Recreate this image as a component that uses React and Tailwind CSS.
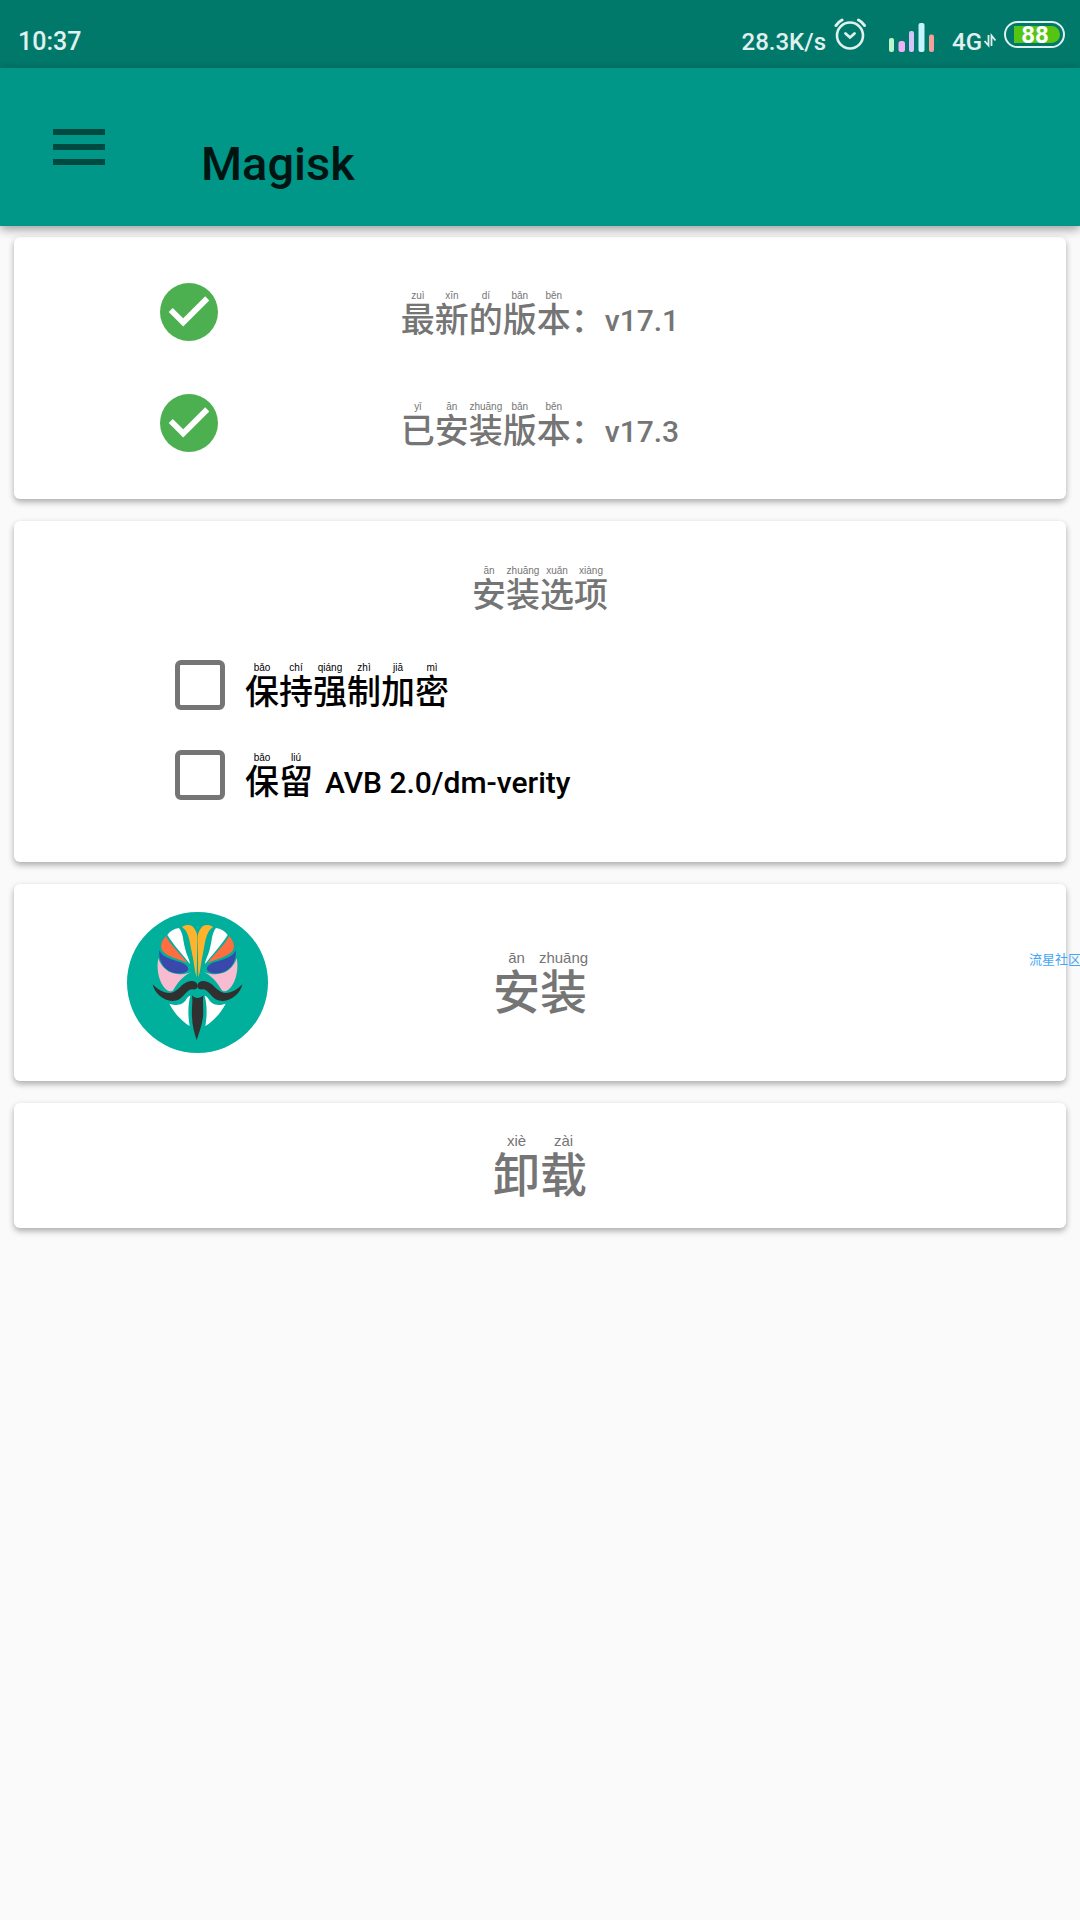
import React, { useState } from 'react';

const Hanzi = ({ chars, large = false }) => (
  <span className="flex">
    {chars.map(([char, pinyin]) => (
      <span
        key={char}
        className={large ? 'flex w-[47px] flex-col items-center' : 'flex w-[34px] flex-col items-center'}
      >
        <span
          className={
            large
              ? "font-['Liberation_Sans',sans-serif] text-[15px] leading-[20px] font-normal"
              : "font-['Liberation_Sans',sans-serif] text-[10px] leading-[14px] font-normal"
          }
        >
          {pinyin}
        </span>
        <span className={large ? 'text-[47px] leading-[50px]' : 'text-[34px] leading-[34px]'}>{char}</span>
      </span>
    ))}
  </span>
);

const StatusBar = () => (
  <div className="flex items-start justify-between bg-[#00796b] pt-4 pr-[15px] pb-3 pl-[18px] text-[25px] leading-[28px] text-[#e0f0ee]">
    <span className="self-end font-medium">10:37</span>
    <div className="flex h-10">
      <span className="self-end text-[24px] font-medium">28.3K/s</span>
      <svg className="ml-2 h-10 w-8" viewBox="834 16 32 40" fill="none" stroke="currentColor" strokeLinecap="round">
        <circle cx="850" cy="35.5" r="13" strokeWidth="2.6" />
        <path d="M845.500 33.500l4.500 4 4.500-4" strokeWidth="2.8" />
        <path d="M836 25.500q2-3.500 6-5.500M858.500 20q4 2 6 5.500" strokeWidth="3" />
      </svg>
      <svg className="ml-[22px] h-10 w-12" viewBox="888 16 48 40">
        <rect x="889" y="38" width="5" height="14" rx="2" fill="#b9f6ca" />
        <rect x="898.500" y="41" width="6.500" height="11" rx="2.500" fill="#f0b0f8" />
        <rect x="909" y="31" width="5" height="21" rx="2" fill="#d4c4f8" />
        <rect x="918.500" y="23" width="6" height="29" rx="2" fill="#c4f4fc" />
        <rect x="929" y="34.500" width="5" height="17.500" rx="2" fill="#f4a09c" />
      </svg>
      <span className="ml-4 self-end text-[24px] font-medium">4G</span>
      <svg className="ml-[2px] h-10 w-3" viewBox="984 16 12 40" fill="none" stroke="currentColor" strokeWidth="1.800">
        <path d="M988.500 35v10.500L984.500 41M991.500 46V35.500l4 5" />
      </svg>
      <div className="mt-[5px] ml-2 flex h-[27px] w-[61px] rounded-full border-2 border-[#e0f0ee] p-[3px]">
        <div className="ml-[5px] flex flex-1 items-center justify-center rounded-l-sm rounded-r-full bg-[#55c413] pr-1 text-[24px] font-bold text-white">
          88
        </div>
      </div>
    </div>
  </div>
);

const Toolbar = () => (
  <header className="relative flex h-[158px] items-start bg-[#009688] pl-[53px] shadow-[0_3px_10px_rgba(0,0,0,0.4)]">
    <button type="button" aria-label="Menu" className="mt-[61px] flex w-[52px] flex-col gap-[9px]">
      <span className="h-[6px] bg-[#004940]" />
      <span className="h-[6px] bg-[#004940]" />
      <span className="h-[6px] bg-[#004940]" />
    </button>
    <h1 className="mt-[66px] ml-24 text-[47px] leading-[60px] font-medium text-[#001512]">Magisk</h1>
  </header>
);

const CheckIcon = () => (
  <svg className="mb-[2px] size-[58px] justify-self-center" viewBox="2 2 20 20">
    <circle cx="12" cy="12" r="10" fill="#4caf50" />
    <path
      fill="#fff"
      d="M10 17l-5-5 1.410-1.410L10 14.170l7.590-7.590L19 8l-9 9z"
    />
  </svg>
);

const VersionRow = ({ chars, version }) => (
  <div className="grid h-[111px] grid-cols-3 items-center font-medium text-[#757575]">
    <CheckIcon />
    <div className="flex items-end justify-center whitespace-nowrap">
      <Hanzi chars={chars} />
      <span className="text-[34px] leading-[34px]">：</span>
      <span className="text-[30px] leading-[32px]">{version}</span>
    </div>
  </div>
);

const OptionRow = ({ id, chars, suffix, checked, onChange }) => (
  <div className="flex h-[90px] items-center gap-5">
    <input
      id={id}
      type="checkbox"
      checked={checked}
      onChange={onChange}
      className="size-[50px] appearance-none rounded-[6px] border-[5px] border-[#757575] bg-white checked:bg-[#009688]"
    />
    <label htmlFor={id} className="flex items-end gap-3 text-black">
      <Hanzi chars={chars} />
      {suffix && <span className="text-[30px] leading-[32px]">{suffix}</span>}
    </label>
  </div>
);

const MagiskLogo = () => (
  <svg className="size-[141px] justify-self-center" viewBox="51 66 423 423">
    <circle cx="262.500" cy="277.500" r="211.500" fill="#00af9c" />
    <g id="half">
      <path fill="#ffb32c" d="M216 111C228 103 243 103 250 112C259 123 262 132 262 145L260 262C253 243 253 219 246 190C239 155 237 124 216 111Z" />
      <path fill="#fff" d="M172 135C180 123 193 116 207 114C220 130 219 153 225 174C229 195 239 208 240 222C222 199 190 164 172 135Z" />
      <path fill="#ff6e40" d="M168 139C180 164 208 188 233 219C210 208 173 202 157 182C149 171 154 151 168 139Z" />
      <path fill="#3949ab" d="M148 181C160 213 221 210 233 231C240 244 221 251 201 250C168 247 144 219 148 181Z" />
      <path fill="#f8bbd0" d="M145 205C158 244 196 265 244 245C218 260 205 273 190 300C187 305 180 305 174 302C151 290 137 243 145 205Z" />
      <path fill="#303030" d="M128 283C146 303 173 315 191 306C211 296 220 274 244 273C255 273 262 279 263 287C263 296 257 299 247 298C232 298 224 318 208 328C174 345 134 315 128 283Z" />
      <path fill="#fff" d="M178 341C199 348 218 347 229 328C233 320 237 318 241 317C233 347 234 380 239 408C217 396 190 366 178 341Z" />
    </g>
    <use href="#half" transform="translate(525 0) scale(-1 1)" />
    <path fill="#303030" d="M246 316C255 327 270 327 280 316C277 337 281 356 279 381C275 408 267 429 260 450C253 429 247 408 246 381C244 356 249 337 246 316Z" />
  </svg>
);

const cardClass = 'rounded-[6px] bg-white shadow-[0_3px_6px_rgba(0,0,0,0.32)]';

export default function App() {
  const [keepEncryption, setKeepEncryption] = useState(false);
  const [keepVerity, setKeepVerity] = useState(false);

  return (
    <div className="relative min-h-screen bg-[#fafafa] font-['Roboto','Noto_Sans_CJK_SC',sans-serif]">
      <StatusBar />
      <Toolbar />

      <main className="flex flex-col gap-[22px] px-[14px] pt-[11px]">
        <section className={`${cardClass} py-5`}>
          <VersionRow
            chars={[['最', 'zuì'], ['新', 'xīn'], ['的', 'dí'], ['版', 'bǎn'], ['本', 'běn']]}
            version="v17.1"
          />
          <VersionRow
            chars={[['已', 'yǐ'], ['安', 'ān'], ['装', 'zhuāng'], ['版', 'bǎn'], ['本', 'běn']]}
            version="v17.3"
          />
        </section>

        <section className={`${cardClass} pt-[43px] pb-[42px]`}>
          <h2 className="mb-7 flex justify-center font-medium text-[#757575]">
            <Hanzi chars={[['安', 'ān'], ['装', 'zhuāng'], ['选', 'xuǎn'], ['项', 'xiàng']]} />
          </h2>
          <div className="pl-[161px] font-medium">
            <OptionRow
              id="keep-encryption"
              chars={[['保', 'bǎo'], ['持', 'chí'], ['强', 'qiáng'], ['制', 'zhì'], ['加', 'jiā'], ['密', 'mì']]}
              checked={keepEncryption}
              onChange={(e) => setKeepEncryption(e.target.checked)}
            />
            <OptionRow
              id="keep-verity"
              chars={[['保', 'bǎo'], ['留', 'liú']]}
              suffix="AVB 2.0/dm-verity"
              checked={keepVerity}
              onChange={(e) => setKeepVerity(e.target.checked)}
            />
          </div>
        </section>

        <button type="button" className={`${cardClass} grid grid-cols-3 items-center px-3 py-7 font-medium text-[#757575]`}>
          <MagiskLogo />
          <span className="flex justify-center">
            <Hanzi large chars={[['安', 'ān'], ['装', 'zhuāng']]} />
          </span>
        </button>

        <button type="button" className={`${cardClass} flex justify-center pt-7 pb-[27px] font-medium text-[#757575]`}>
          <Hanzi large chars={[['卸', 'xiè'], ['载', 'zài']]} />
        </button>
      </main>

      <div className="absolute top-[952px] right-0 w-[51px] overflow-hidden text-[13px] leading-[16px] whitespace-nowrap text-[#42a5f5]">
        流星社区
      </div>
    </div>
  );
}
